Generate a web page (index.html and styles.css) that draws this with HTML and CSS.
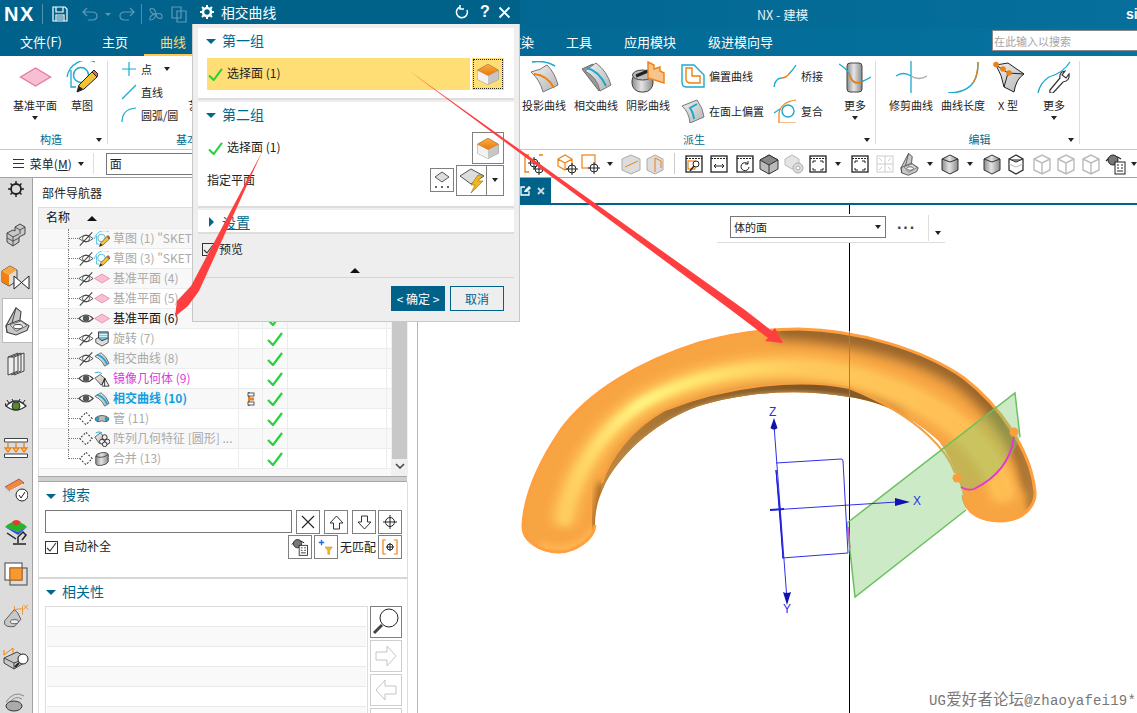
FILE: index.html
```html
<!DOCTYPE html>
<html lang="zh">
<head>
<meta charset="utf-8">
<title>NX - 建模</title>
<link rel="stylesheet" href="styles.css">
</head>
<body>
<svg class="defs" width="0" height="0" aria-hidden="true">
  <defs>
    <linearGradient id="gOrange" x1="0" y1="0" x2="0" y2="1"><stop offset="0" stop-color="#fbb040"/><stop offset="1" stop-color="#e8780c"/></linearGradient>
    <linearGradient id="gSheet" x1="0" y1="0" x2="1" y2="1"><stop offset="0" stop-color="#f0f0f0"/><stop offset="1" stop-color="#b5b5b5"/></linearGradient>
    <linearGradient id="gCyl" x1="0" y1="0" x2="1" y2="0"><stop offset="0" stop-color="#8d8d8d"/><stop offset=".45" stop-color="#e4e4e4"/><stop offset="1" stop-color="#8a8a8a"/></linearGradient>
    <linearGradient id="gHi" gradientUnits="userSpaceOnUse" x1="560" y1="0" x2="1010" y2="0"><stop offset="0" stop-color="#ffc95c"/><stop offset=".18" stop-color="#fff684"/><stop offset=".3" stop-color="#ffe870"/><stop offset=".55" stop-color="#ffc95c"/><stop offset="1" stop-color="#ffbb50"/></linearGradient>
    <linearGradient id="gBand" gradientUnits="userSpaceOnUse" x1="600" y1="0" x2="960" y2="0"><stop offset="0" stop-color="#c08a40"/><stop offset=".25" stop-color="#9a6a2e"/><stop offset=".6" stop-color="#7d5526"/><stop offset="1" stop-color="#996a30"/></linearGradient>
    <filter id="blur6" x="-20%" y="-20%" width="140%" height="140%"><feGaussianBlur stdDeviation="6"/></filter>
    <filter id="blur3" x="-20%" y="-20%" width="140%" height="140%"><feGaussianBlur stdDeviation="3"/></filter>
    <filter id="blur1" x="-20%" y="-20%" width="140%" height="140%"><feGaussianBlur stdDeviation="1.6"/></filter>
    <clipPath id="torusClip"><path d="M524 525C526 488 545 455 562 430C590 392 640 362 700 343C735 333 770 329 800 329C860 330 925 350 965 378C1000 405 1032 450 1036 492C1037 505 1025 521 1001 521C985 521 966 515 964 495C960 478 952 458 940 441C915 418 885 402 850 397C800 388 745 392 700 406C660 420 625 450 607 482C599 498 596 510 596 525C595 540 575 552 560 552C540 552 523 540 524 525Z"/></clipPath>

    <symbol id="cube" viewBox="0 0 32 32"><polygon points="16,3 30,11 30,23 16,30 2,23 2,11" fill="#c8c8c8" stroke="#888"/><polygon points="2,11 16,18 16,30 2,23" fill="#f2f2f2"/><polygon points="30,11 16,18 16,30 30,23" fill="#c6c6c6"/><polygon points="16,3 30,11 16,18 2,11" fill="url(#gOrange)" stroke="#c96d10" stroke-width=".6"/></symbol>
    <symbol id="eye" viewBox="0 0 18 16"><path d="M1 8Q9 0 17 8Q9 16 1 8Z" fill="#fff" stroke="#444" stroke-width="1.2"/><circle cx="9" cy="8" r="3.6" fill="#555"/></symbol>
    <symbol id="eyeoff" viewBox="0 0 18 16"><path d="M1 8Q9 1 17 8Q9 15 1 8Z" fill="#fff" stroke="#444"/><circle cx="9" cy="8" r="4" fill="none" stroke="#444"/><path d="M2 16L16 1" stroke="#444" stroke-width="1.2"/></symbol>
    <symbol id="hidden" viewBox="0 0 18 16"><path d="M9 1L16 8L9 15L2 8Z" fill="none" stroke="#333" stroke-width="1.2" stroke-dasharray="2 2"/></symbol>
    <symbol id="sketch" viewBox="0 0 32 32"><path d="M1 16A20 20 0 0 1 29 1" fill="none" stroke="#19a9cf" stroke-width="1.3"/><path d="M5 9V26H10" fill="none" stroke="#19a9cf" stroke-width="1.3"/><circle cx="15" cy="14" r="7.5" fill="none" stroke="#19a9cf" stroke-width="1.5"/><polygon points="11,31 13,24 26,11 31,16 18,28" fill="#f5c234" stroke="#222"/><polygon points="26,11 28,9 32,13 31,16" fill="#e86a5c" stroke="#222"/><polygon points="11,31 13,25 17,28" fill="#222"/></symbol>
    <symbol id="plane" viewBox="0 0 32 20"><polygon points="1,10 16,1 31,10 16,19" fill="#f6bfd4" stroke="#e57ba3" stroke-width="1.4"/></symbol>
    <symbol id="revolve" viewBox="0 0 18 18"><path d="M2 9L9 5L16 8V13L9 17L2 13Z" fill="#ddd" stroke="#444"/><path d="M5 1H16V8L9 11L5 8Z" fill="#63bfe0" stroke="#333"/><path d="M6 4H15M6 6H15" stroke="#fff"/></symbol>
    <symbol id="surf" viewBox="0 0 18 18"><path d="M1 6L8 2Q14 6 17 14L12 17Q8 9 1 6Z" fill="url(#gSheet)" stroke="#666"/><path d="M3 4Q11 6 15 15" fill="none" stroke="#19a9cf" stroke-width="2"/></symbol>
    <symbol id="mirror" viewBox="0 0 18 18"><path d="M1 8L7 4L13 9L8 16Z" fill="url(#gSheet)" stroke="#555"/><path d="M1 2Q6 0 9 3" fill="none" stroke="#19a9cf"/><path d="M9 16L12 8M12 8V17M12 8L17 17M9 17H17" stroke="#222" fill="none"/></symbol>
    <symbol id="tube" viewBox="0 0 18 18"><path d="M1 9Q3 5 9 5Q15 5 17 9Q15 13 12 12Q9 10 6 12Q3 13 1 9Z" fill="#bbb" stroke="#555"/><ellipse cx="3.5" cy="9" rx="2" ry="2.5" fill="#19a9cf" stroke="#555" stroke-width=".5"/><ellipse cx="14.5" cy="9" rx="2" ry="2.5" fill="#19a9cf" stroke="#555" stroke-width=".5"/></symbol>
    <symbol id="pattern" viewBox="0 0 18 18"><path d="M1 7L7 2L12 7L6 14Z" fill="url(#gSheet)" stroke="#555"/><path d="M2 2Q6 0 9 2" fill="none" stroke="#19a9cf"/><g fill="#eee" stroke="#222"><circle cx="12" cy="7" r="2.8"/><circle cx="9" cy="12" r="2.8"/><circle cx="15" cy="12" r="2.8"/><circle cx="12" cy="15" r="2.6"/></g></symbol>
    <symbol id="unite" viewBox="0 0 18 18"><path d="M2 6Q2 3 8 2Q15 1 16 4V12Q15 15 9 16Q2 17 2 14Z" fill="url(#gCyl)" stroke="#444"/><path d="M2 6Q9 9 16 4" fill="none" stroke="#444"/></symbol>
    <symbol id="check" viewBox="0 0 16 14"><path d="M1 8L6 13L15 1" fill="none" stroke="#22d43a" stroke-width="2.2"/></symbol>

    <symbol id="cubegray" viewBox="0 0 24 24"><polygon points="12,3 21,8 21,17 12,22 3,17 3,8" fill="#bbb" stroke="#333"/><polygon points="3,8 12,13 21,8 12,3" fill="#888" stroke="#333"/><path d="M12 13V22" stroke="#333"/></symbol>
    <symbol id="wire" viewBox="0 0 24 24"><path d="M4 7L12 3L20 7V18L12 22L4 18Z M4 7L12 11L20 7M12 11V22" fill="none" stroke="#bbb" stroke-width="1.4"/></symbol>
    <symbol id="cyl" viewBox="0 0 24 24"><path d="M4 7L12 3L20 7V18L12 22L4 18Z" fill="url(#gCyl)" stroke="#333"/><path d="M4 7L12 10L20 7" fill="none" stroke="#333"/></symbol>
    <symbol id="window" viewBox="0 0 24 24"><rect x="4" y="4" width="16" height="16" fill="#fff" stroke="#222" stroke-width="1.3"/><path d="M4 6.500H20" stroke="#222" stroke-dasharray="2 1"/></symbol>
    <symbol id="part" viewBox="0 0 28 32"><path d="M2 21L12 2L17 6L16 15L25 21L23 26L12 31L3 28Z" fill="#c8c8c8" stroke="#444" stroke-width="1.1"/><path d="M2 21L8 18L12 2M8 18L16 15M3 28L2 21" fill="none" stroke="#444"/><path d="M6 20L17 16L23 21L12 27Z" fill="#dedede" stroke="#555" stroke-width=".8"/><ellipse cx="14" cy="22" rx="4.500" ry="2.300" fill="#fff" stroke="#444"/></symbol>
  </defs>
</svg>

<div class="app">
  <header class="titlebar">
    <strong class="logo">NX</strong>
    <span class="tsep"></span>
    <svg class="save" width="16" height="16" viewBox="0 0 16 16"><path d="M1 1H13L15 3V15H1Z M4 1V6H11V1 M4 15V9H12V15 M5 11H11M5 13H11" fill="none" stroke="#fff" stroke-width="1.2"/></svg>
    <svg class="undo" width="16" height="14" viewBox="0 0 16 14"><path d="M5 1L1 5L5 9M1 5H10Q15 5 15 9T10 13H6" fill="none" stroke="#5f9ab5" stroke-width="1.2"/></svg>
    <span class="tcaret"></span>
    <svg class="redo" width="16" height="14" viewBox="0 0 16 14"><path d="M11 1L15 5L11 9M15 5H6Q1 5 1 9T6 13H10" fill="none" stroke="#5f9ab5" stroke-width="1.2"/></svg>
    <span class="tsep tsep2"></span>
    <svg class="fan" width="16" height="16" viewBox="0 0 16 16"><path d="M8 8Q2 8 2 3Q7 1 8 8Q15 6 14 12Q9 14 8 8Q7 14 2 14Q1 9 8 8" fill="none" stroke="#5f9ab5" stroke-width="1.1"/></svg>
    <svg class="copy" width="16" height="17" viewBox="0 0 16 17"><path d="M1 1H10V12H1Z M6 5H15V16H6Z" fill="none" stroke="#5f9ab5" stroke-width="1.2"/></svg>
    <span class="apptitle">NX - 建模</span>
    <span class="brand">si</span>
  </header>
  <nav class="tabs">
    <span class="tab tab-file">文件(F)</span>
    <span class="tab tab-home">主页</span>
    <span class="tab tab-curve">曲线</span>
    <span class="tab tab-render">渲染</span>
    <span class="tab tab-tools">工具</span>
    <span class="tab tab-apps">应用模块</span>
    <span class="tab tab-wizard">级进模向导</span>
    <input class="search" placeholder="在此输入以搜索">
  </nav>

  <section class="ribbon">
    <div class="group g-build">
      <div class="gbody">
        <div class="big b-plane"><svg width="33" height="20" class="mt-plane"><use href="#plane"/></svg><span>基准平面</span><i class="caret"></i></div>
        <div class="big b-sketch"><svg width="32" height="32"><use href="#sketch"/></svg><span>草图</span></div>
      </div>
      <div class="gfoot"><span></span><b>构造</b><i class="caret"></i></div>
    </div>
    <div class="group g-basic">
      <div class="gbody">
        <div class="smalls smalls-basic">
          <div class="small"><svg width="16" height="16" viewBox="0 0 16 16"><path d="M8 1V15M1 8H15" stroke="#19a9cf" stroke-width="1.2"/></svg><span>点</span><i class="caret caret-inline"></i></div>
          <div class="small"><svg width="16" height="16" viewBox="0 0 16 16"><path d="M1 15L15 1" stroke="#19a9cf" stroke-width="1.2"/></svg><span>直线</span></div>
          <div class="small"><svg width="16" height="16" viewBox="0 0 16 16"><path d="M1 15Q1 2 15 1" fill="none" stroke="#19a9cf" stroke-width="1.2"/></svg><span>圆弧/圆</span></div>
        </div>
        <div class="big b-spline"><span>艺</span></div>
      </div>
      <div class="gfoot gfoot-basic"><b>基本</b></div>
    </div>
    <div class="group g-derive">
      <div class="gbody">
        <div class="big b52"><svg width="34" height="32" viewBox="0 0 34 32"><path d="M4 11Q14 9 20 4Q28 12 31 24L16 31Q13 19 4 11Z" fill="url(#gSheet)" stroke="#777"/><path d="M7 13Q20 14 27 27" fill="none" stroke="#f08010" stroke-width="2"/><path d="M5 1Q18 -1 28 5" fill="none" stroke="#19a9cf" stroke-width="1.6"/></svg><span>投影曲线</span></div>
        <div class="big b52"><svg width="34" height="32" viewBox="0 0 34 32"><path d="M3 8L14 3L30 20L20 30Z" fill="#9a9a9a" stroke="#666"/><path d="M6 10Q14 4 17 2Q28 10 32 24L21 30Q18 16 6 10Z" fill="url(#gSheet)" stroke="#777"/><path d="M8 7Q20 10 27 25" fill="none" stroke="#19a9cf" stroke-width="2"/></svg><span>相交曲线</span></div>
        <div class="big b52"><svg width="34" height="32" viewBox="0 0 34 32"><rect x="1" y="11" width="21" height="20" rx="9" fill="url(#gCyl)" stroke="#444"/><ellipse cx="11.500" cy="14" rx="10" ry="5" fill="#bbb" stroke="#444"/><path d="M5 15L17 10" stroke="#222" stroke-width="3"/><path d="M17 1L23 4V8L29 6V10L33 12V22L17 17Z" fill="#f7c48e" stroke="#f08010" stroke-width="1.4"/></svg><span>阴影曲线</span></div>
        <div class="smalls s-offset">
          <div class="small"><svg width="24" height="24" viewBox="0 0 24 24"><path d="M1 1H13L23 11V23H5Q1 23 1 18Z" fill="none" stroke="#19a9cf" stroke-width="1.4"/><path d="M5 4H11V12H19V19H10Q5 19 5 15Z" fill="none" stroke="#f08010" stroke-width="1.4"/></svg><span>偏置曲线</span></div>
          <div class="small"><svg width="24" height="24" viewBox="0 0 24 24"><path d="M1 7L16 1Q22 9 23 18L9 24Q8 13 1 7Z" fill="url(#gSheet)" stroke="#777"/><path d="M16 5L9 9Q12 13 13 20" fill="none" stroke="#19a9cf" stroke-width="2"/></svg><span>在面上偏置</span></div>
        </div>
        <div class="smalls s-bridge">
          <div class="small"><svg width="24" height="24" viewBox="0 0 24 24"><path d="M1 23Q2 15 8 14" fill="none" stroke="#19a9cf" stroke-width="1.4"/><path d="M8 14Q13 14 16 10" fill="none" stroke="#f08010" stroke-width="1.4"/><path d="M16 10Q20 6 23 1" fill="none" stroke="#19a9cf" stroke-width="1.4"/></svg><span>桥接</span></div>
          <div class="small"><svg width="24" height="24" viewBox="0 0 24 24"><circle cx="15" cy="12" r="6" fill="none" stroke="#19a9cf" stroke-width="1.4"/><path d="M6 24V14Q8 3 23 1M6 24H23" fill="none" stroke="#f08010" stroke-width="1.2"/><path d="M1 14L7 10" stroke="#19a9cf" stroke-width="1.2"/></svg><span>复合</span></div>
        </div>
        <div class="big b-more"><svg width="32" height="32" viewBox="0 0 32 32"><rect x="8" y="2" width="15" height="29" rx="3" fill="url(#gCyl)" stroke="#444"/><path d="M0 3Q10 9 12 17Q14 24 22 21Q27 19 32 16" fill="none" stroke="#19a9cf" stroke-width="1.4"/><path d="M10 12Q13 24 22 21" fill="none" stroke="#f08010" stroke-width="1.6"/></svg><span>更多</span><i class="caret"></i></div>
      </div>
      <div class="gfoot"><span></span><b>派生</b><i class="caret"></i></div>
    </div>
    <div class="group g-edit">
      <div class="gbody">
        <div class="big b52"><svg width="32" height="32" viewBox="0 0 32 32"><path d="M16 0V32" stroke="#19a9cf" stroke-width="1.3"/><path d="M1 15Q8 10 16 15" fill="none" stroke="#19a9cf" stroke-width="1.3"/><path d="M16 15Q24 20 32 15" fill="none" stroke="#aaa" stroke-width="1.3"/></svg><span>修剪曲线</span></div>
        <div class="big b52"><svg width="32" height="32" viewBox="0 0 32 32"><path d="M1 32Q32 32 31 1" fill="none" stroke="#19a9cf" stroke-width="1.4"/><path d="M26 22Q31 14 31 1" fill="none" stroke="#f08010" stroke-width="1.4"/></svg><span>曲线长度</span></div>
        <div class="big b-x"><svg width="32" height="32" viewBox="0 0 32 32"><path d="M4 4L16 2L32 13Q24 18 22 31L12 26Q10 14 4 4Z" fill="url(#gSheet)" stroke="#222"/><path d="M4 4L16 12L32 13M16 12L12 26" stroke="#222" fill="none"/><g fill="#f08010"><circle cx="4" cy="3.500" r="2.800"/><circle cx="11" cy="8" r="2.800"/><circle cx="17" cy="12" r="2.800"/></g></svg><span>X 型</span></div>
        <div class="big b-more2"><svg width="34" height="32" viewBox="0 0 34 32"><path d="M1 32Q3 22 12 16Q26 12 33 1" fill="none" stroke="#19a9cf" stroke-width="1.3"/><path d="M13 29L23 17Q22 11 28 10L25 14L29 17L32 13Q33 20 26 21L16 32Q12 33 13 29Z" fill="#fff" stroke="#333" stroke-width="1.2"/></svg><span>更多</span><i class="caret"></i></div>
      </div>
      <div class="gfoot"><span></span><b>编辑</b><i class="caret"></i></div>
    </div>
  </section>

  <div class="toolbar">
    <span class="burger"></span>
    <span class="menu">菜单(<u>M</u>)</span>
    <i class="caret caret-menu"></i>
    <span class="vsep vsep-menu"></span>
    <div class="filter">面</div>
    <i class="caret ct-a"></i>
    <svg class="t m-a" width="24" height="24" viewBox="0 0 24 24"><path d="M7 3H3V20H7M17 3H21" fill="none" stroke="#f08010" stroke-width="1.3"/><circle cx="12" cy="11" r="4" fill="none" stroke="#222"/><path d="M12 5V17M6 11H18" stroke="#222"/><circle cx="17" cy="17" r="4" fill="none" stroke="#222"/><path d="M17 11V23M11 17H23" stroke="#222"/></svg>
    <svg class="t m-b" width="24" height="24" viewBox="0 0 24 24"><path d="M3 7L10 3L17 7V14L10 18L3 14Z M3 7L10 11L17 7M10 11V18" fill="none" stroke="#f08010" stroke-width="1.2"/><circle cx="17" cy="17" r="4" fill="#fff" stroke="#222"/><path d="M17 11V23M11 17H23" stroke="#222"/></svg>
    <svg class="t" width="24" height="24" viewBox="0 0 24 24"><rect x="3" y="3" width="13" height="13" fill="none" stroke="#f08010" stroke-width="1.2"/><circle cx="15" cy="16" r="4" fill="#fff" stroke="#222"/><path d="M15 10V22M9 16H21" stroke="#222"/></svg>
    <i class="caret ct-b"></i>
    <svg class="t m-c" width="24" height="24" viewBox="0 0 24 24"><path d="M3 7L12 3L21 7V18L12 22L3 18Z" fill="#ddd" stroke="#aaa"/><path d="M6 15L19 9" stroke="#f08010"/></svg>
    <svg class="t" width="24" height="24" viewBox="0 0 24 24"><path d="M4 7L12 3L20 7V18L12 22L4 18Z" fill="#ddd" stroke="#aaa"/><path d="M12 6V20M12 6L18 9V16" fill="none" stroke="#f08010"/></svg>
    <span class="vsep vsep-t"></span>
    <svg class="t" width="24" height="24" viewBox="0 0 24 24"><use href="#window"/><rect x="6" y="9" width="7" height="8" fill="none" stroke="#f08010" stroke-width="1.2"/><circle cx="14" cy="12" r="3" fill="#fff" stroke="#222"/><path d="M12 14L8 19" stroke="#222" stroke-width="1.4"/></svg>
    <svg class="t g1" width="24" height="24" viewBox="0 0 24 24"><use href="#window"/><path d="M7 14H17M7 14L9 12M7 14L9 16M17 14L15 12M17 14L15 16" fill="none" stroke="#222"/></svg>
    <svg class="t g2" width="24" height="24" viewBox="0 0 24 24"><use href="#window"/><path d="M15 12A4 4 0 1 0 16 15M15 9V12H12" fill="none" stroke="#222"/></svg>
    <svg class="t" width="24" height="24" viewBox="0 0 24 24"><use href="#cubegray"/></svg>
    <svg class="t g1" width="24" height="24" viewBox="0 0 24 24"><path d="M3 7L10 3L17 7V13L10 17L3 13Z" fill="#e4e4e4" stroke="#bbb"/><circle cx="16" cy="16" r="5" fill="#ddd" stroke="#aaa"/><circle cx="16" cy="16" r="2" fill="#fff" stroke="#aaa"/></svg>
    <svg class="t" width="24" height="24" viewBox="0 0 24 24"><use href="#window"/><path d="M7 11V9H10M17 11V9H14M7 16V18H10M17 16V18H14" fill="none" stroke="#222"/></svg>
    <i class="caret ct-c"></i>
    <svg class="t g3" width="24" height="24" viewBox="0 0 24 24"><use href="#window"/><path d="M7 11V9H10M17 11V9H14M7 16V18H10M17 16V18H14" fill="none" stroke="#222"/></svg>
    <svg class="t g1" width="24" height="24" viewBox="0 0 24 24"><rect x="4" y="4" width="16" height="16" fill="none" stroke="#ccc"/><path d="M6 6L9 9M18 6L15 9M6 18L9 15M18 18L15 15M4 12H20M12 4V20" stroke="#ccc"/></svg>
    <svg class="t g1" width="24" height="24" viewBox="0 0 28 32"><use href="#part"/></svg>
    <i class="caret ct-d"></i>
    <svg class="t" width="24" height="24" viewBox="0 0 24 24"><use href="#cyl"/></svg>
    <i class="caret ct-e"></i>
    <svg class="t g2" width="24" height="24" viewBox="0 0 24 24"><use href="#cyl"/></svg>
    <svg class="t" width="24" height="24" viewBox="0 0 24 24"><path d="M5 7L12 3L19 7V18L12 22L5 18Z" fill="none" stroke="#333" stroke-width="1.300"/><path d="M5 7L12 10L19 7" fill="#888" stroke="#333"/><path d="M5 12L12 15L19 12" fill="none" stroke="#bbb"/></svg>
    <svg class="t g2" width="24" height="24" viewBox="0 0 24 24"><use href="#wire"/></svg>
    <svg class="t" width="24" height="24" viewBox="0 0 24 24"><use href="#wire"/></svg>
    <svg class="t g1" width="24" height="24" viewBox="0 0 24 24"><use href="#wire"/></svg>
    <svg class="t g1" width="24" height="24" viewBox="0 0 24 24"><path d="M2 9Q9 1 17 7" fill="none" stroke="#222" stroke-width="1.200"/><circle cx="9" cy="8" r="5" fill="#777" stroke="#222"/><rect x="11" y="10" width="10" height="12" fill="#fff" stroke="#222"/><path d="M13 13H15M17 13H19M13 16H15M17 16H19M13 19H19" stroke="#222"/></svg>
    <i class="caret ct-f"></i>
  </div>

  <main class="workspace">
    <aside class="rail">
      <div class="rail-gear"><svg width="16" height="16" viewBox="0 0 16 16"><circle cx="8" cy="8" r="5" fill="none" stroke="#222" stroke-width="1.800"/><path d="M8 0V3M8 13V16M0 8H3M13 8H16M2.500 2.500L4.500 4.500M11.500 11.500L13.500 13.500M2.500 13.500L4.500 11.500M11.500 4.500L13.500 2.500" stroke="#222" stroke-width="1.500"/></svg></div>
      <div class="rail-item"><svg width="20" height="24" viewBox="0 0 20 24"><path d="M1 10L7 7L9 8V4L14 1L19 4V11L13 14V19L7 23L1 19Z" fill="#c8c8c8" stroke="#444"/><path d="M1 10L7 14L13 11M7 14V23M9 4L14 7L19 4M14 7V11M1 15L7 18L13 15" fill="none" stroke="#444" stroke-width=".9"/></svg></div>
      <div class="rail-item"><svg width="30" height="26" viewBox="0 0 30 26"><path d="M1 7L9 2L16 6V17L8 22L1 18Z" fill="#ddd" stroke="#444"/><path d="M1 7L8 11V22L1 18Z" fill="#f08010"/><path d="M1 7L9 2L16 6L8 11Z" fill="#f9a641"/><path d="M13 12L28 25V12L13 25Z" fill="#fff" stroke="#222"/></svg></div>
      <div class="rail-item rail-active"><svg width="28" height="30" viewBox="0 0 28 32" preserveAspectRatio="none"><use href="#part"/></svg></div>
      <div class="rail-item"><svg width="18" height="24" viewBox="0 0 18 24"><path d="M1 5L11 1V19L1 23Z M4 5L14 1V19L4 23M7 5L17 1V19L7 23M1 5H7V23" fill="#eee" stroke="#444"/></svg></div>
      <div class="rail-item"><svg width="22" height="14" viewBox="0 0 22 14"><path d="M1 7Q11 -3 21 7Q11 15 1 7Z" fill="#fff" stroke="#333" stroke-width="1.300"/><circle cx="11" cy="7" r="4" fill="#5a8a22" stroke="#234"/><path d="M1 7L0 4M4 4L2 1M8 2L7 0M14 2L15 0M18 4L20 1" stroke="#222"/></svg></div>
      <div class="rail-item"><svg width="24" height="20" viewBox="0 0 24 20"><path d="M0.500 0.500H23.500V4H0.500ZM0.500 16H23.500V19.500H0.500Z" fill="#fff" stroke="#444"/><path d="M4 5V10M1 10H7L4 14ZM12 5V10M9 10H15L12 14ZM20 5V10M17 10H23L20 14Z" fill="none" stroke="#f08010" stroke-width="1.300"/></svg></div>
      <div class="rail-item"><svg width="24" height="24" viewBox="0 0 24 24"><path d="M1 9L15 1L20 5L6 13Z" fill="#f08a3c" stroke="#a55"/><path d="M1 9L6 13V15L1 11Z" fill="#ccc"/><path d="M6 13L19 6" stroke="#fff"/><circle cx="18" cy="17" r="6" fill="#fff" stroke="#222"/><path d="M15 17L17 20L21 14" fill="none" stroke="#222"/></svg></div>
      <div class="rail-item"><svg width="24" height="26" viewBox="0 0 24 26"><path d="M1 8Q12 -3 23 8L14 13Z" fill="#2ab32a"/><path d="M8 3Q12 -1 17 3L12 7Z" fill="#e33"/><path d="M1 8L14 13L23 8L14 16Z" fill="#2b55d8"/><path d="M3 14L12 20M9 25H22M14 24V18L19 13L22 16L18 21" fill="none" stroke="#222" stroke-width="1.500"/></svg></div>
      <div class="rail-item"><svg width="24" height="24" viewBox="0 0 24 24"><rect x="1" y="1" width="17" height="17" fill="#fff" stroke="#444"/><rect x="6" y="6" width="17" height="17" fill="none" stroke="#444"/><rect x="6" y="6" width="12" height="12" fill="#f59a2c" stroke="#c9601a"/></svg></div>
      <div class="rail-item"><svg width="26" height="26" viewBox="0 0 32 32"><path d="M2 22L14 8L18 12L22 20L14 29Q4 30 2 26Z" fill="#c8c8c8" stroke="#444"/><ellipse cx="14" cy="23" rx="5" ry="2.500" fill="#eee" stroke="#444"/><path d="M14 4V10M24 4V14M15 8L23 7M25 2L31 8M31 2L25 8" stroke="#f08010" fill="none"/></svg></div>
      <div class="rail-item"><svg width="26" height="24" viewBox="0 0 26 24"><path d="M1 12L14 6L24 12V15L11 23L1 17Z" fill="#c8c8c8" stroke="#444"/><path d="M1 12L11 17L24 12M11 17V23" fill="none" stroke="#444"/><path d="M1 9L10 2M1 4V9M10 2V7" stroke="#f08010" fill="none"/><circle cx="20" cy="13" r="5" fill="#fff" stroke="#222"/><path d="M16 17L12 21" stroke="#222" stroke-width="2"/></svg></div>
      <div class="rail-item"><svg width="24" height="24" viewBox="0 0 24 24"><path d="M2 14Q10 2 20 8M6 14Q11 7 18 11" fill="none" stroke="#888"/><ellipse cx="10" cy="18" rx="8" ry="5" fill="#aaa" stroke="#333"/></svg></div>
    </aside>

    <section class="navigator">
      <h2 class="nav-title">部件导航器</h2>
      <div class="tree">
        <div class="row row-head"><div class="c-name head-name"><span>名称</span><i class="caret-up"></i></div><div></div><div></div><div></div></div>
        <div class="row"><div class="c-name"><i class="tick"></i><svg width="16" height="15"><use href="#eyeoff"/></svg><svg width="16" height="16"><use href="#sketch"/></svg><span class="dim">草图 (1) "SKET</span></div><div></div><div class="c-ok"><svg width="16" height="14"><use href="#check"/></svg></div><div></div></div>
        <div class="row"><div class="c-name"><i class="tick"></i><svg width="16" height="15"><use href="#eyeoff"/></svg><svg width="16" height="16"><use href="#sketch"/></svg><span class="dim">草图 (3) "SKET</span></div><div></div><div class="c-ok"><svg width="16" height="14"><use href="#check"/></svg></div><div></div></div>
        <div class="row"><div class="c-name"><i class="tick"></i><svg width="16" height="15"><use href="#eyeoff"/></svg><svg width="16" height="11"><use href="#plane"/></svg><span class="dim">基准平面 (4)</span></div><div></div><div class="c-ok"><svg width="16" height="14"><use href="#check"/></svg></div><div></div></div>
        <div class="row"><div class="c-name"><i class="tick"></i><svg width="16" height="15"><use href="#eyeoff"/></svg><svg width="16" height="11"><use href="#plane"/></svg><span class="dim">基准平面 (5)</span></div><div></div><div class="c-ok"><svg width="16" height="14"><use href="#check"/></svg></div><div></div></div>
        <div class="row"><div class="c-name"><i class="tick"></i><svg width="16" height="15"><use href="#eye"/></svg><svg width="16" height="11"><use href="#plane"/></svg><span>基准平面 (6)</span></div><div></div><div class="c-ok"><svg width="16" height="14"><use href="#check"/></svg></div><div></div></div>
        <div class="row"><div class="c-name"><i class="tick"></i><svg width="16" height="15"><use href="#eyeoff"/></svg><svg width="16" height="16"><use href="#revolve"/></svg><span class="dim">旋转 (7)</span></div><div></div><div class="c-ok"><svg width="16" height="14"><use href="#check"/></svg></div><div></div></div>
        <div class="row"><div class="c-name"><i class="tick"></i><svg width="16" height="15"><use href="#eyeoff"/></svg><svg width="16" height="16"><use href="#surf"/></svg><span class="dim">相交曲线 (8)</span></div><div></div><div class="c-ok"><svg width="16" height="14"><use href="#check"/></svg></div><div></div></div>
        <div class="row"><div class="c-name"><i class="tick"></i><svg width="16" height="15"><use href="#eye"/></svg><svg width="16" height="16"><use href="#mirror"/></svg><span class="magenta">镜像几何体 (9)</span></div><div></div><div class="c-ok"><svg width="16" height="14"><use href="#check"/></svg></div><div></div></div>
        <div class="row"><div class="c-name"><i class="tick"></i><svg width="16" height="15"><use href="#eye"/></svg><svg width="16" height="16"><use href="#surf"/></svg><span class="sky">相交曲线 (10)</span></div><div class="c-link"><svg width="8" height="14" viewBox="0 0 8 14"><path d="M2 0V14" stroke="#222"/><rect x="1" y="1" width="6" height="3" fill="#fff" stroke="#333" stroke-width=".8"/><rect x="1" y="5.500" width="6" height="3" fill="#f08010"/><rect x="1" y="10" width="6" height="3" fill="#fff" stroke="#333" stroke-width=".8"/></svg></div><div class="c-ok"><svg width="16" height="14"><use href="#check"/></svg></div><div></div></div>
        <div class="row"><div class="c-name"><i class="tick"></i><svg width="16" height="15"><use href="#hidden"/></svg><svg width="16" height="16"><use href="#tube"/></svg><span class="dim">管 (11)</span></div><div></div><div class="c-ok"><svg width="16" height="14"><use href="#check"/></svg></div><div></div></div>
        <div class="row"><div class="c-name"><i class="tick"></i><svg width="16" height="15"><use href="#hidden"/></svg><svg width="16" height="16"><use href="#pattern"/></svg><span class="dim clip">阵列几何特征 [圆形] ...</span></div><div></div><div class="c-ok"><svg width="16" height="14"><use href="#check"/></svg></div><div></div></div>
        <div class="row"><div class="c-name"><i class="tick tick-end"></i><svg width="16" height="15"><use href="#hidden"/></svg><svg width="16" height="16"><use href="#unite"/></svg><span class="dim">合并 (13)</span></div><div></div><div class="c-ok"><svg width="16" height="14"><use href="#check"/></svg></div><div></div></div>
        <div class="scrollbar"><div class="thumb"></div><svg class="chev" width="10" height="6" viewBox="0 0 10 6"><path d="M1 1L5 5L9 1" fill="none" stroke="#444" stroke-width="1.500"/></svg></div>
      </div>
      <div class="sash"></div>
      <div class="panel panel-search">
        <h3 class="ptitle"><i class="tri-down"></i><span>搜索</span></h3>
        <div class="srow">
          <div class="sinput"></div>
          <div class="ibtn"><svg width="14" height="14" viewBox="0 0 14 14"><path d="M1 1L13 13M13 1L1 13" stroke="#222" stroke-width="1.100"/></svg></div>
          <div class="ibtn"><svg width="15" height="15" viewBox="0 0 15 15"><path d="M7.500 1L14 8H10.500V14H4.500V8H1Z" fill="none" stroke="#333"/></svg></div>
          <div class="ibtn"><svg width="15" height="15" viewBox="0 0 15 15"><path d="M7.500 14L14 7H10.500V1H4.500V7H1Z" fill="none" stroke="#333"/></svg></div>
          <div class="ibtn ibtn-last"><svg width="16" height="16" viewBox="0 0 16 16"><circle cx="8" cy="8" r="4.500" fill="none" stroke="#222"/><path d="M8 1V15M1 8H15" stroke="#222"/></svg></div>
        </div>
        <div class="srow2">
          <label class="check"><i class="box"><svg width="11" height="11" viewBox="0 0 11 11"><path d="M1 6L4 9L10 1" fill="none" stroke="#333" stroke-width="1.100"/></svg></i><span>自动补全</span></label>
          <div class="ibtn"><svg width="20" height="20" viewBox="0 0 24 24"><path d="M2 9Q9 1 17 7" fill="none" stroke="#222" stroke-width="1.200"/><circle cx="9" cy="8" r="5" fill="#777" stroke="#222"/><rect x="11" y="10" width="10" height="12" fill="#fff" stroke="#222"/><path d="M13 13H15M17 13H19M13 16H15M17 16H19M13 19H19" stroke="#222"/></svg></div>
          <div class="ibtn"><svg width="18" height="18" viewBox="0 0 20 20"><path d="M2 5H8M5 2V8" stroke="#1a6ae8" stroke-width="1.500"/><path d="M9 10H17L14 14V18H12V14Z" fill="#f3b533" stroke="#c98a1a" stroke-width=".6"/></svg></div>
          <span class="nomatch">无匹配</span>
          <div class="ibtn ibtn-last"><svg width="18" height="18" viewBox="0 0 18 18"><path d="M5 2H2V16H5M13 2H16V16H13" fill="none" stroke="#f08010" stroke-width="1.200"/><circle cx="9" cy="9" r="3" fill="none" stroke="#222"/><path d="M9 5V13M5 9H13" stroke="#222"/></svg></div>
        </div>
      </div>
      <div class="panel panel-rel">
        <h3 class="ptitle"><i class="tri-down"></i><span>相关性</span></h3>
        <div class="rel">
          <div class="rel-list"><div></div><div></div><div></div><div></div><div></div><div></div></div>
          <div class="rel-btns">
            <div class="rbtn"><svg width="30" height="30" viewBox="0 0 30 30"><circle cx="18" cy="11" r="9" fill="#fff" stroke="#222"/><path d="M11 18L3 26" stroke="#444" stroke-width="3"/></svg></div>
            <div class="rbtn rbtn-off"><svg width="22" height="22" viewBox="0 0 22 22"><path d="M1 7H12V1L21 11L12 21V15H1Z" fill="none" stroke="#c4c4c4"/></svg></div>
            <div class="rbtn rbtn-off"><svg width="22" height="22" viewBox="0 0 22 22"><path d="M21 7H10V1L1 11L10 21V15H21Z" fill="none" stroke="#c4c4c4"/></svg></div>
            <div class="rbtn rbtn-off"></div>
          </div>
        </div>
      </div>
    </section>

    <section class="viewport">
      <div class="vtabs"><div class="vtab"><svg width="11" height="11" viewBox="0 0 11 11"><path d="M9 6V10H1V2H5" fill="none" stroke="#fff" stroke-width="1.300"/><path d="M4 7L5 5L9 1L11 3L7 7Z" fill="#fff"/></svg><svg width="8" height="8" viewBox="0 0 8 8"><path d="M1 1L7 7M7 1L1 7" stroke="#c9dbe4" stroke-width="1.800"/></svg></div></div>
      <div class="canvas">
        <svg class="scene" width="718" height="508" viewBox="419 205 718 508">
          <path d="M850.500 205V713" stroke="#000"/>
          <g clip-path="url(#torusClip)">
            <rect x="500" y="310" width="560" height="260" fill="#f7a442"/>
            <path d="M775 329C860 333 925 352 965 380C1000 408 1030 450 1034 490" fill="none" stroke="#96642a" stroke-width="20" filter="url(#blur6)"/>
            <path d="M620 465C640 435 690 405 740 395C800 385 860 392 905 412" fill="none" stroke="#d58a34" stroke-width="14" filter="url(#blur6)"/>
            <path d="M564 525C570 480 600 430 645 402C690 377 750 365 804 368C860 372 920 395 960 427C985 450 1000 470 1006 500" fill="none" stroke="#ffc65a" stroke-width="24" filter="url(#blur6)"/>
            <path d="M564 525C570 480 600 430 645 402C690 377 750 365 804 368C860 372 920 395 960 427C985 450 1000 470 1006 500" fill="none" stroke="url(#gHi)" stroke-width="11" filter="url(#blur3)"/>
            <path d="M1010 420C1025 450 1034 480 1032 510" fill="none" stroke="#b27a38" stroke-width="10" filter="url(#blur3)"/>
            <path d="M603 483L595 535" fill="none" stroke="#a86c28" stroke-width="9" filter="url(#blur3)"/>
            <path d="M540 545C560 556 590 545 596 528" fill="none" stroke="#ffb450" stroke-width="10" filter="url(#blur3)"/>
            <path d="M956 473C950 455 925 418 850 388C800 378 730 385 666 410C630 430 610 460 603 483L596 530L607 482C625 450 660 420 700 406C745 392 800 388 850 397C885 402 915 418 940 441C950 455 960 478 964 495Z" fill="url(#gBand)"/>
            <path d="M850 397C800 388 745 392 700 406C660 420 625 450 607 482" fill="none" stroke="#b98a4c" stroke-width="3" filter="url(#blur1)"/>
          </g>
          <path d="M956 473C950 455 925 418 850 388C800 378 730 385 666 410C630 430 610 460 603 483" fill="none" stroke="#f8a03e" stroke-width="2"/>
          <path d="M524 525C526 488 545 455 562 430C590 392 640 362 700 343C735 333 770 329 800 329C860 330 925 350 965 378C1000 405 1032 450 1036 492C1037 505 1025 521 1001 521C985 521 966 515 964 495M596 525C595 540 575 552 560 552C540 552 523 540 524 525" fill="none" stroke="#ff9f3e" stroke-width="3"/>
          <path d="M850.500 331V398" stroke="#5f8fb0"/>

          <path d="M848 523L1016 393L1021 437Q1010 470 975 489Q968 490 962 487L964 495L967 510L856 597Z" fill="#7ccb6f" fill-opacity=".4"/>
          <path d="M1021 437L1016 393L848 523L856 597L967 510" fill="none" stroke="#6cc060" stroke-width="1.500"/>
          <path d="M962 487Q968 491 975 489Q1010 472 1015 437" fill="none" stroke="#e835d8" stroke-width="1.800"/>
          <path d="M849 527L851 548" stroke="#c85ad0" stroke-width="1.500"/>
          <circle cx="1015" cy="432" r="4.500" fill="#f8a03e"/>
          <circle cx="958" cy="478" r="4.500" fill="#f8a03e"/>

          <g fill="none" stroke="#2f2fe8" stroke-width="1">
            <path d="M775 425L788 600"/>
            <path d="M777 463L842 459Q844 459 844 461L849 553L783 558"/>
            <path d="M772 510L898 502"/>
          </g>
          <path d="M777 470L784 558L781 510Z" fill="#1f1fd8" stroke="#1f1fd8" stroke-width="1"/>
          <path d="M771 510L785 509" stroke="#1f1fd8" stroke-width="2"/>
          <path d="M775 418L771.500 428Q775 431 778.500 428Z" fill="#1212b0"/>
          <path d="M788 605L784 592Q787.500 594 792 592Z" fill="#1212b0"/>
          <path d="M911 502L896 498V506Z" fill="#1212b0"/>
          <text class="axis" x="770" y="416">Z</text>
          <text class="axis" x="914" y="505">X</text>
          <text class="axis" x="784" y="613">Y</text>
        </svg>
        <div class="selbar">
          <div class="seldrop"><span>体的面</span><i class="caret"></i></div>
          <span class="dots">···</span>
          <span class="vsep vsep-sel"></span>
          <i class="caret caret-sel"></i>
        </div>
        <div class="watermark">UG<span class="wm-cjk">爱好者论坛</span>@zhaoyafei19*</div>
      </div>
    </section>
  </main>
</div>

<aside class="dialog">
  <header class="dlg-title">
    <svg width="16" height="16" viewBox="0 0 16 16"><circle cx="8" cy="8" r="4" fill="none" stroke="#fff" stroke-width="2.600"/><path d="M8 1V3M8 13V15M1 8H3M13 8H15M3 3L4.500 4.500M11.500 11.500L13 13M3 13L4.500 11.500M11.500 4.500L13 3" stroke="#fff" stroke-width="2"/></svg>
    <span class="dlg-name">相交曲线</span>
    <svg class="dlg-reset" width="14" height="14" viewBox="0 0 14 14"><path d="M5 2A5.500 5.500 0 1 0 12 5M5 0V4H9" fill="none" stroke="#fff" stroke-width="1.500"/></svg>
    <span class="dlg-help">?</span>
    <svg width="13" height="13" viewBox="0 0 13 13"><path d="M1.500 1.500L11.500 11.500M11.500 1.500L1.500 11.500" stroke="#fff" stroke-width="1.800"/></svg>
  </header>
  <div class="dlg-body">
    <section class="dsec dsec-one">
      <h3 class="dhead"><i class="tri-down"></i><span>第一组</span></h3>
      <div class="selrow">
        <div class="selbox"><svg width="15" height="13"><use href="#check"/></svg><span>选择面 (1)</span></div>
        <div class="selbtn"><svg width="24" height="24"><use href="#cube"/></svg></div>
      </div>
    </section>
    <section class="dsec dsec-two">
      <h3 class="dhead"><i class="tri-down"></i><span>第二组</span></h3>
      <div class="selrow2">
        <div class="plainsel"><svg width="15" height="13"><use href="#check"/></svg><span>选择面 (1)</span></div>
        <div class="cubebtn"><svg width="24" height="24"><use href="#cube"/></svg></div>
      </div>
      <div class="planerow">
        <span>指定平面</span>
        <div class="pl-small"><svg width="22" height="22" viewBox="0 0 22 22"><polygon points="4,8 11,3 18,8 11,13" fill="#ddd" stroke="#555"/><path d="M4 18H6M10 18H12M16 18H18" stroke="#333" stroke-width="1.300"/></svg></div>
        <div class="pl-split"><div class="pl-main"><svg width="26" height="28" viewBox="0 0 26 28"><polygon points="1,10 12,3 25,10 12,18" fill="#ddd" stroke="#555"/><path d="M19 9L12 19H16L12 27L24 15H19L24 9Z" fill="#f5b81c" stroke="#8a6a10" stroke-width=".6"/></svg></div><div class="pl-drop"><i class="caret"></i></div></div>
      </div>
    </section>
    <section class="dsec dsec-set"><h3 class="dhead"><i class="tri-right"></i><u>设置</u></h3></section>
    <label class="preview"><i class="box box-pv"><svg width="11" height="11" viewBox="0 0 11 11"><path d="M1 6L4 9L10 1" fill="none" stroke="#333" stroke-width="1.100"/></svg></i><span>预览</span></label>
    <div class="dlg-more"><i class="caret-up"></i></div>
    <div class="dlg-actions">
      <button class="btn-ok">&lt; 确定 &gt;</button>
      <button class="btn-cancel">取消</button>
    </div>
  </div>
</aside>

<svg class="arrows" width="1137" height="713" viewBox="0 0 1137 713">
  <polygon points="408,70 745,310 772,331 775,328 783,343 765,341 768,338 731,310" fill="#ff3f3f"/>
  <polygon points="262,152 199,291 188,306 175,316.500 177,301 191,286" fill="#ff3f3f"/>
</svg>
</body>
</html>
```

FILE: styles.css
```css
* { box-sizing: border-box; }
html, body { margin: 0; padding: 0; }
body {
  width: 1137px;
  height: 713px;
  overflow: hidden;
  position: relative;
  background: #fff;
  color: #222;
  font-family: "Noto Sans CJK SC", "Noto Sans", sans-serif;
  font-size: 12px;
}
svg { display: block; flex: none; }
i { font-style: normal; }
h2, h3 { margin: 0; font-weight: 400; }
.defs { position: absolute; }
.app { width: 1137px; height: 713px; display: flex; flex-direction: column; }

/* title + tabs */
.titlebar {
  height: 28px;
  flex: none;
  display: flex;
  align-items: center;
  background: linear-gradient(90deg, #00618a, #066f9c);
  color: #fff;
  position: relative;
}
.logo { font: 700 20px/28px "Liberation Sans", sans-serif; margin-left: 4px; width: 38px; letter-spacing: 1.500px; }
.tsep { width: 1px; height: 20px; background: #4f90ab; }
.save { margin-left: 9px; }
.undo { margin-left: 14px; }
.tcaret { margin-left: 7px; border: 3px solid transparent; border-top-color: #5f9ab5; border-bottom: 0; }
.redo { margin-left: 8px; }
.tsep2 { margin-left: 6px; }
.fan { margin-left: 6px; }
.copy { margin-left: 7px; }
.apptitle { margin-left: 570px; font-size: 12.500px; color: #e8f1f5; white-space: nowrap; }
.brand { margin-left: auto; margin-right: -3px; font: 700 14px "Liberation Sans", sans-serif; width: 14px; }
.tabs {
  height: 28px;
  flex: none;
  display: flex;
  align-items: center;
  background: linear-gradient(90deg, #00618a, #0673a0);
  position: relative;
}
.tab { color: #fff; font-size: 13px; line-height: 28px; white-space: nowrap; }
.tab-file { margin-left: 20px; }
.tab-home { margin-left: 40px; }
.tab-curve { color: #ffd772; height: 28px; box-shadow: inset 0 -2px 0 #ffc94d; padding: 0 16px; margin-left: 16px; }
.tab-render { margin-left: 306px; }
.tab-tools { margin-left: 32px; }
.tab-apps { margin-left: 32px; }
.tab-wizard { margin-left: 32px; }
.search {
  position: absolute;
  left: 992px;
  top: 2px;
  width: 145px;
  height: 21px;
  padding: 0 1px;
  border: 1px solid #888;
  border-right: 0;
  font: 11px "Noto Sans CJK SC", sans-serif;
  background: #fff;
}
.search::placeholder { color: #a5a5a5; }

/* ribbon */
.ribbon { height: 94px; flex: none; display: flex; background: #fff; border-bottom: 1px solid #c9c9c9; font-size: 11px; }
.group { display: flex; flex-direction: column; height: 93px; position: relative; }
.group::after { content: ""; position: absolute; right: 0; top: 5px; bottom: 5px; width: 1px; background: #ddd; }
.gbody { height: 74px; display: flex; align-items: flex-start; }
.gfoot { height: 19px; display: grid; grid-template-columns: 1fr auto 1fr; align-items: center; padding-right: 6px; color: #006a8f; }
.gfoot b { font-weight: 400; font-size: 11px; line-height: 19px; }
.gfoot .caret { justify-self: end; }
.g-build { width: 108px; }
.g-build .gbody { padding-left: 11px; }
.g-basic { width: 408px; }
.g-derive { width: 360px; padding-left: 2px; }
.g-edit { width: 204px; padding-left: 9px; }
.big { display: flex; flex-direction: column; align-items: center; padding-top: 5px; flex: none; white-space: nowrap; }
.big span { line-height: 14px; margin-top: 5px; }
.big .caret { margin-top: 4px; }
.b-plane { width: 48px; }
.mt-plane { margin-top: 6px; margin-bottom: 6px; }
.b-sketch { width: 32px; margin-left: 7px; }
.b52 { width: 52px; }
.b-more { width: 32px; margin-left: 1px; }
.b-x { width: 38px; }
.b-more2 { width: 48px; margin-left: 3px; }
.b-spline { padding-top: 37px; width: 44px; align-items: flex-start; }
.smalls { display: flex; flex-direction: column; flex: none; }
.small { display: flex; align-items: center; white-space: nowrap; gap: 4px; }
.smalls-basic { margin-left: 13px; padding-top: 5px; gap: 7px; width: 67px; }
.s-offset { margin-left: 7px; width: 92px; padding-top: 8px; gap: 11px; }
.s-bridge { width: 65px; padding-top: 8px; gap: 11px; }
.gfoot-basic { display: block; color: #006a8f; padding-left: 68px; }
.caret { display: inline-block; width: 0; height: 0; flex: none; border-style: solid; border-width: 4px 3.500px 0; border-color: #222 transparent transparent; }
.caret-inline { margin-left: 8px; }
.caret-up { display: inline-block; width: 0; height: 0; border-style: solid; border-width: 0 5px 5px; border-color: transparent transparent #111; }

/* toolbar */
.toolbar { height: 28px; flex: none; display: flex; align-items: center; border-bottom: 1px solid #a2a2a2; background: #fff; }
.burger { width: 11px; height: 9px; margin-left: 13px; border-top: 1px solid #333; border-bottom: 1px solid #333; background: linear-gradient(#333, #333) center/100% 1px no-repeat; }
.menu { margin-left: 6px; white-space: nowrap; }
.caret-menu { margin-left: 6px; }
.vsep { width: 1px; background: #ddd; flex: none; }
.vsep-menu { height: 21px; margin-left: 9px; }
.filter { margin-left: 12px; width: 200px; height: 22px; border: 1px solid #777; padding-left: 3px; line-height: 20px; }
.ct-a { margin-left: 210px; }
.t { flex: none; }
.g1 { margin-left: 1px; }
.g2 { margin-left: 2px; }
.g3 { margin-left: 3px; }
.m-a { margin-left: 3px; }
.m-b { margin-left: 9px; }
.ct-b { margin-left: 4px; }
.m-c { margin-left: 6px; }
.vsep-t { height: 21px; margin: 0 7px 0 7px; background: #ccc; }
.ct-c { margin: 0 4px 0 5px; }
.ct-d { margin: 0 5px; }
.ct-e { margin: 0 5px; }
.ct-f { margin-left: 3px; }

/* workspace */
.workspace { flex: 1; min-height: 0; display: flex; }
.rail { width: 33px; flex: none; background: #dcdcdc; border-right: 1px solid #a2a2a2; display: flex; flex-direction: column; overflow: hidden; }
.rail-gear { height: 24px; margin-bottom: 17px; display: flex; align-items: center; justify-content: center; padding: 3px 1px 0 0; }
.rail-item { height: 42px; flex: none; display: flex; align-items: center; justify-content: center; }
.rail-active { height: 45px; margin-left: 2px; width: 31px; background: #fff; border: 1px solid #bbb; border-right: 0; }

.navigator { width: 385px; flex: none; padding-left: 5px; background: #fff; border-right: 1px solid #b5b5b5; padding-right: 10px; display: flex; flex-direction: column; }
.nav-title { font-size: 12px; line-height: 29px; height: 29px; padding-left: 4px; flex: none; }
.tree { height: 269px; flex: none; position: relative; border: 1px solid #dedede; border-bottom: 0; background: #f9f9f9; }
.row { display: grid; grid-template-columns: 200px 24px 25px 99px; height: 20px; background: #fff; border-bottom: 1px solid #ececec; }
.row:nth-child(even) { background: #f8f8f8; }
.row > div { border-right: 1px solid #ececec; min-width: 0; }
.row-head { background: #f2f2f2; height: 21px; }
.row-head > div { border-right: 0; }
.c-name { display: flex; align-items: center; padding-left: 29px; overflow: hidden; white-space: nowrap; color: #111; line-height: 18px; }
.c-name span { margin-left: 3px; padding-bottom: 2px; }
.head-name { padding-left: 7px; }
.head-name span { margin: 0; }
.head-name .caret-up { margin-left: 17px; }
.tick { width: 10px; height: 20px; flex: none; border-left: 1px dotted #777; background: repeating-linear-gradient(90deg, #777 0 1px, transparent 1px 2px) 0 50% / 100% 1px no-repeat; }
.tick-end { height: 10px; margin-bottom: 10px; background-position: 0 100%; }
.dim { color: #aaa; }
.magenta { color: #d93bd9; }
.sky { color: #119fe0; font-weight: 700; }
.clip { max-width: 125px; overflow: hidden; }
.c-ok, .c-link { display: flex; align-items: center; justify-content: center; }
.scrollbar { position: absolute; left: 352px; top: 21px; bottom: 0; width: 17px; background: #f0f0f0; display: flex; flex-direction: column; align-items: center; }
.thumb { width: 15px; height: 230px; background: #c8c8c8; flex: none; }
.chev { margin-top: 4px; }
.sash { height: 6px; flex: none; background: #cfcfcf; border: 1px solid #a8a8a8; border-width: 1px 0; }
.panel { border-left: 1px solid #dedede; border-right: 1px solid #dedede; flex: none; padding: 0 4px 0 6px; width: 370px; }
.panel-search { height: 97px; border-bottom: 2px solid #d6d6d6; }
.ptitle { font-size: 14px; color: #00688f; height: 28px; line-height: 24px; display: flex; align-items: center; gap: 6px; }
.ptitle span { padding-bottom: 4px; }
.tri-down { display: inline-block; width: 0; height: 0; flex: none; border-style: solid; border-width: 5px 5.500px 0; border-color: #00688f transparent transparent; margin-left: 1px; }
.tri-right { display: inline-block; width: 0; height: 0; flex: none; border-style: solid; border-width: 5.500px 0 5.500px 5px; border-color: transparent transparent transparent #00688f; margin-left: 2px; margin-right: 5px; }
.srow { display: flex; gap: 4px; height: 25px; }
.sinput { width: 247px; height: 23px; border: 1px solid #777; flex: none; }
.ibtn { width: 24px; height: 24px; border: 1px solid #808080; background: #fff; display: flex; align-items: center; justify-content: center; flex: none; }
.ibtn-last { margin-left: -2px; }
.srow2 { display: flex; align-items: center; gap: 2px; height: 24px; }
.check { display: flex; align-items: center; gap: 5px; width: 241px; flex: none; }
.check span { padding-bottom: 3px; }
.box { width: 13px; height: 13px; border: 1px solid #333; display: flex; align-items: center; justify-content: center; background: #fff; flex: none; }
.nomatch { width: 36px; white-space: nowrap; margin-right: 2px; flex: none; padding-bottom: 2px; }
.panel-rel { flex: 1; overflow: hidden; min-height: 0; }
.panel-rel .ptitle { height: 27px; }
.rel { display: flex; gap: 2px; }
.rel-list { width: 323px; flex: none; border: 1px solid #ddd; padding: 0 1px; }
.rel-list div { height: 20px; border-bottom: 1px solid #eaeaea; }
.rel-list div:nth-child(even) { background: #f9f9f9; }
.rel-btns { width: 32px; flex: none; display: flex; flex-direction: column; gap: 2px; }
.rbtn { width: 32px; height: 32px; flex: none; border: 1px solid #808080; display: flex; align-items: center; justify-content: center; }
.rbtn-off { border-color: #cfcfcf; }

/* viewport */
.viewport { flex: 1; min-width: 0; display: flex; flex-direction: column; background: #fff; position: relative; }
.vtabs { height: 27px; flex: none; border-bottom: 2px solid #006289; padding-left: 1px; }
.vtab { width: 132px; height: 25px; background: #006289; display: flex; align-items: center; justify-content: flex-end; gap: 6px; padding-right: 6px; }
.canvas { flex: 1; position: relative; min-height: 0; }
.scene { position: absolute; left: 0; top: 0; }
.axis { font: 12px "Liberation Sans", sans-serif; fill: #2f2fe8; }
.selbar { position: absolute; left: 299px; top: 9px; width: 228px; height: 29px; background: #fff; border-bottom: 1px solid #ddd; display: flex; align-items: center; padding-left: 13px; }
.seldrop { width: 156px; height: 22px; border: 1px solid #777; display: flex; align-items: center; justify-content: space-between; padding: 0 4px 0 3px; font-size: 11px; margin-bottom: 3px; }
.dots { margin-left: 11px; width: 31px; font: 700 16px "Liberation Sans", sans-serif; color: #444; letter-spacing: 1px; }
.vsep-sel { height: 26px; background: #ddd; }
.caret-sel { margin: 10px 0 0 6px; }
.watermark { position: absolute; left: 511px; top: 486px; white-space: nowrap; font: 14px/20px "Liberation Mono", "Noto Sans CJK SC", monospace; color: #777; letter-spacing: .2px; }
.wm-cjk { font-size: 15.400px; }

/* dialog */
.dialog { position: absolute; left: 192px; top: 0; width: 328px; height: 322px; background: #eee; border: 1px solid #c8c8c8; border-top: 0; display: flex; flex-direction: column; }
.dlg-title { height: 24px; flex: none; margin: 0 -1px; background: #006289; color: #fff; display: flex; align-items: center; padding: 0 9px 0 7px; }
.dlg-name { margin-left: 6px; font-size: 13.800px; flex: 1; padding-bottom: 1px; }
.dlg-reset { margin-right: 6px; }
.dlg-help { font: 700 16px "Liberation Sans", sans-serif; width: 20px; text-align: center; margin-right: 3px; }
.dlg-body { flex: 1; padding: 4px 5px 0 5px; display: flex; flex-direction: column; min-height: 0; }
.dsec { background: #fff; border-bottom: 2px solid #ddd; margin-bottom: 2px; flex: none; }
.dsec-one { height: 72px; }
.dsec-two { height: 106px; }
.dsec-set { height: 24px; margin-bottom: 0; }
.dhead { font-size: 14px; color: #00688f; height: 26px; line-height: 22px; display: flex; align-items: center; padding-left: 7px; }
.dhead span { padding-bottom: 2px; }
.dhead .tri-down { margin-right: 6px; }
.dhead .tri-right { margin-left: 4px; margin-right: 8px; }
.dsec-set .dhead { height: 24px; }
.selrow { display: flex; padding: 4px 10px 0 9px; gap: 2px; }
.selbox { width: 264px; height: 32px; background: #ffde75; display: flex; align-items: center; padding-left: 1px; gap: 4px; }
.selbox span, .plainsel span { padding-bottom: 3px; }
.preview span { padding-bottom: 1px; }
.selbtn { width: 32px; height: 32px; background: #ffde75; display: flex; align-items: center; justify-content: center; }
.selbtn svg { outline: 1px dotted #222; outline-offset: 2px; }
.selrow2 { display: flex; justify-content: space-between; padding: 4px 10px 0 9px; height: 36px; }
.plainsel { display: flex; align-items: center; gap: 4px; padding-left: 1px; height: 32px; }
.cubebtn { width: 32px; height: 32px; border: 1px solid #808080; display: flex; align-items: center; justify-content: center; }
.planerow { display: flex; align-items: center; padding: 0 10px 0 9px; height: 32px; }
.planerow span { width: 223px; flex: none; padding-bottom: 1px; }
.pl-small { width: 24px; height: 24px; border: 1px solid #808080; display: flex; align-items: center; justify-content: center; }
.pl-split { margin-left: 2px; width: 49px; height: 31px; border: 1px solid #808080; display: flex; }
.pl-main { width: 30px; border-right: 1px solid #808080; display: flex; align-items: center; justify-content: center; }
.pl-drop { flex: 1; display: flex; align-items: center; justify-content: center; }
.preview { display: flex; align-items: center; gap: 4px; height: 30px; padding-left: 4px; flex: none; }
.box-pv { background: transparent; }
.dlg-more { height: 12px; flex: none; display: flex; justify-content: center; align-items: center; }
.dlg-more .caret-up { margin-left: -3px; }
.dlg-actions { flex: 1; margin-top: 1px; border-top: 1px solid #d4d4d4; display: flex; justify-content: flex-end; gap: 5px; padding: 8px 10px 0 0; }
.btn-ok, .btn-cancel { width: 54px; height: 25px; font: 12px "Noto Sans CJK SC", sans-serif; padding: 0; }
.btn-ok { background: #006289; color: #fff; border: 0; }
.btn-cancel { background: #eee; color: #006289; border: 1px solid #006289; }

.arrows { position: absolute; left: 0; top: 0; pointer-events: none; }
```
